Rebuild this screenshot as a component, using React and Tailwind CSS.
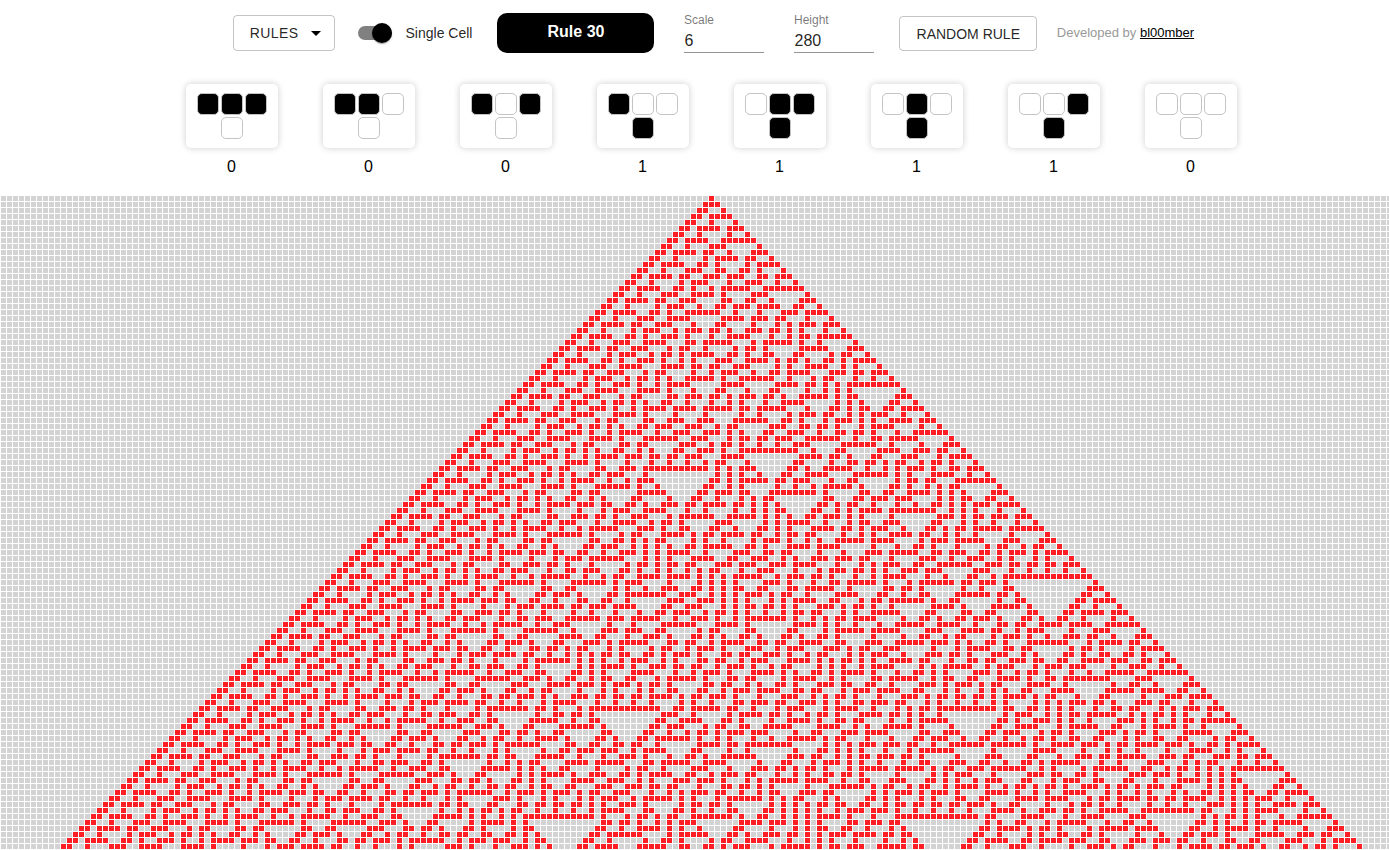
import React from "react";

const RULE = 30;
const COLS = 237;
const ROWS = 109;
const SCALE = 6;
const PATTERNS = [7, 6, 5, 4, 3, 2, 1, 0];

const output = (n) => (RULE >> n) & 1;

function evolve() {
  let row = new Array(COLS).fill(0);
  row[118] = 1;
  const rows = [row];
  for (let y = 1; y < ROWS; y++) {
    const prev = row;
    row = prev.map((c, x) => output(((prev[x - 1] || 0) << 2) | (c << 1) | (prev[x + 1] || 0)));
    rows.push(row);
  }
  return rows;
}

function cellPath(rows, value) {
  let d = "";
  rows.forEach((row, y) =>
    row.forEach((c, x) => {
      if (c === value) d += `M${x * SCALE + 1} ${y * SCALE}h5v5h-5z`;
    })
  );
  return d;
}

const rows = evolve();
const offPath = cellPath(rows, 0);
const onPath = cellPath(rows, 1);

function Cell({ on }) {
  return (
    <span
      className={
        on
          ? "m-px block size-[22px] rounded-[5px] border border-[#c4c4c4] bg-black"
          : "m-px block size-[22px] rounded-[5px] border border-[#c4c4c4] bg-white"
      }
    />
  );
}

function RuleCard({ n }) {
  return (
    <div className="flex w-[92px] flex-col items-center">
      <div className="flex h-16 w-[92px] flex-col items-center rounded-[5px] bg-white px-2.5 py-2 shadow-[0_0_7px_rgba(0,0,0,0.2)]">
        <div className="flex">
          <Cell on={n & 4} />
          <Cell on={n & 2} />
          <Cell on={n & 1} />
        </div>
        <Cell on={output(n)} />
      </div>
      <div className="mt-2.5 w-[91px] self-start text-center text-base leading-[18px] text-black">{output(n)}</div>
    </div>
  );
}

function Field({ label, value }) {
  return (
    <label className="flex h-[41px] w-20 flex-col border-b border-[#949494]">
      <span className="text-xs leading-4 text-black/54">{label}</span>
      <span className="mt-[3px] pl-[0.5px] text-base leading-[19px] text-black/87">{value}</span>
    </label>
  );
}

export default function App() {
  return (
    <div className="h-[850px] w-full overflow-hidden bg-white font-['Liberation_Sans',Arial,sans-serif]">
      <header className="flex h-[84px] items-start pl-[233px]">
        <button className="mt-[15px] flex h-9 w-[102px] items-center rounded border border-black/23 pl-[15.8px] text-sm tracking-[0.4px] text-black/87">
          RULES
          <svg className="ml-[5.7px] size-6" viewBox="0 0 24 24" fill="#000">
            <path d="M7 10l5 5 5-5z" />
          </svg>
        </button>
        <div className="mt-[23px] ml-[23px] flex h-5 items-center">
          <span className="flex h-3.5 w-[34px] items-center justify-end rounded-full bg-[#808080]">
            <span className="size-5 shrink-0 rounded-full bg-black shadow-[0_2px_1px_-1px_rgba(0,0,0,0.2),0_1px_1px_0_rgba(0,0,0,0.14),0_1px_3px_0_rgba(0,0,0,0.12)]" />
          </span>
          <span className="ml-[13.5px] w-[68px] text-sm leading-5 whitespace-nowrap text-black/87">Single Cell</span>
        </div>
        <div className="mt-[13px] ml-[23.5px] flex h-10 w-[157px] justify-center rounded-[10px] bg-black pl-px text-base leading-[37px] font-bold text-white">
          Rule 30
        </div>
        <div className="mt-3 ml-[30px] flex gap-[30px]">
          <Field label="Scale" value="6" />
          <Field label="Height" value="280" />
        </div>
        <button className="mt-4 ml-[25px] flex h-[35px] w-[138px] items-center justify-center rounded border border-black/23 pl-[0.5px] text-sm whitespace-nowrap text-black/87">
          RANDOM RULE
        </button>
        <p className="mt-6 ml-[19.8px] text-[13px] leading-[18px] whitespace-nowrap text-[#999]">
          Developed by <a className="text-black underline">bl00mber</a>
        </p>
      </header>
      <section className="flex h-28 gap-[45px] pl-[186px]">
        {PATTERNS.map((n) => (
          <RuleCard key={n} n={n} />
        ))}
      </section>
      <svg className="block" width="1423" height="654" viewBox="0 0 1423 654" shapeRendering="crispEdges">
        <path d={offPath} fill="#d3d3d3" />
        <path d={onPath} fill="#ff1e23" />
      </svg>
    </div>
  );
}
